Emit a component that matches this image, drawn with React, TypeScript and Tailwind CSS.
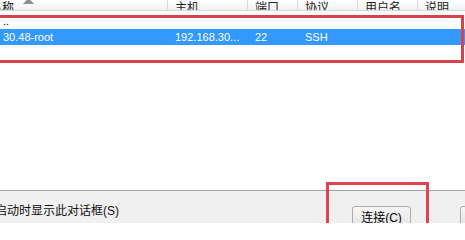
import React from 'react';

const font = { fontFamily: '"Liberation Sans", "Noto Sans CJK SC", sans-serif' };

const columns = [
  { key: 'name', label: '名称', width: 'w-[178px]', pad: 'pl-[13px]' },
  { key: 'host', label: '主机', width: 'w-[80px]', pad: 'pl-[7px]' },
  { key: 'port', label: '端口', width: 'w-[50px]', pad: 'pl-[7px]' },
  { key: 'proto', label: '协议', width: 'w-[60px]', pad: 'pl-[7px]' },
  { key: 'user', label: '用户名', width: 'w-[60px]', pad: 'pl-[7px]' },
  { key: 'desc', label: '说明', width: 'w-[60px]', pad: 'pl-[7px]' },
];

const rows = [
  { name: '..', host: '', port: '', proto: '', user: '', desc: '', selected: false },
  { name: '30.48-root', host: '192.168.30...', port: '22', proto: 'SSH', user: '', desc: '', selected: true },
];

const App = () => {
  return (
    <div className="relative w-[465px] h-[223px] overflow-hidden bg-white text-black" style={font}>
      <div className="flex flex-col h-full">
        {/* Column header, scrolled partly out of view */}
        <div className="flex h-[11px] overflow-hidden border-b border-[#dadada] bg-gradient-to-b from-white to-[#f1f1f1] -ml-[10px]">
          {columns.map((col, i) => (
            <div
              key={col.key}
              className={`relative ${col.width} ${i === 0 ? 'pl-[0px]' : col.pad} shrink-0 flex items-end h-full border-r border-[#dcdcdc] text-[12px] leading-[12px]`}
            >
              <span className="-mb-[4px] text-[#222]">{col.label}</span>
              {i === 0 && (
                <svg className="absolute left-[33px] top-[-2px]" width="11" height="6" viewBox="0 0 11 6">
                  <path d="M5.5 0 L11 6 L0 6 Z" fill="#8f8f8f" />
                </svg>
              )}
            </div>
          ))}
        </div>

        {/* Session list */}
        <div className="flex-1 pt-[2px]">
          {rows.map((row, r) => (
            <div
              key={r}
              className={`flex h-[16px] items-center -ml-[10px] text-[11px] ${row.selected ? 'bg-[#3399ff] text-white' : 'text-black'}`}
            >
              {columns.map((col) => (
                <div key={col.key} className={`${col.width} ${col.pad} shrink-0 whitespace-nowrap overflow-hidden`}>
                  {row[col.key as keyof typeof row] as string}
                </div>
              ))}
            </div>
          ))}
        </div>

        {/* Footer */}
        <div className="h-[33px] shrink-0 border-t border-[#a0a0a0] bg-[#f0f0f0] flex items-start">
          <div className="-ml-[5px] mt-[13px] text-[12px] leading-[14px] text-[#111] whitespace-nowrap">启动时显示此对话框(S)</div>
          <div className="ml-auto flex gap-[49px] mt-[15px] -mr-[54px]">
            <button className="w-[59px] h-[23px] rounded-[3px] border border-[#adadad] bg-gradient-to-b from-[#f6f6f6] to-[#e3e3e3] text-[12px] leading-[14px] text-black pt-[1px]">
              连接(C)
            </button>
            <button className="w-[59px] h-[23px] rounded-[3px] border border-[#adadad] bg-gradient-to-b from-[#f6f6f6] to-[#e3e3e3] text-[12px] leading-[14px] text-black">
              关闭
            </button>
          </div>
        </div>
      </div>

      {/* Red highlight annotations */}
      <div className="absolute left-[-3px] top-[15px] w-[467px] h-[48px] border-[3px] border-[#d6444a]" />
      <div className="absolute left-[326px] top-[182px] w-[103px] h-[60px] border-[3px] border-[#e0444c]" />
    </div>
  );
};

export default App;
